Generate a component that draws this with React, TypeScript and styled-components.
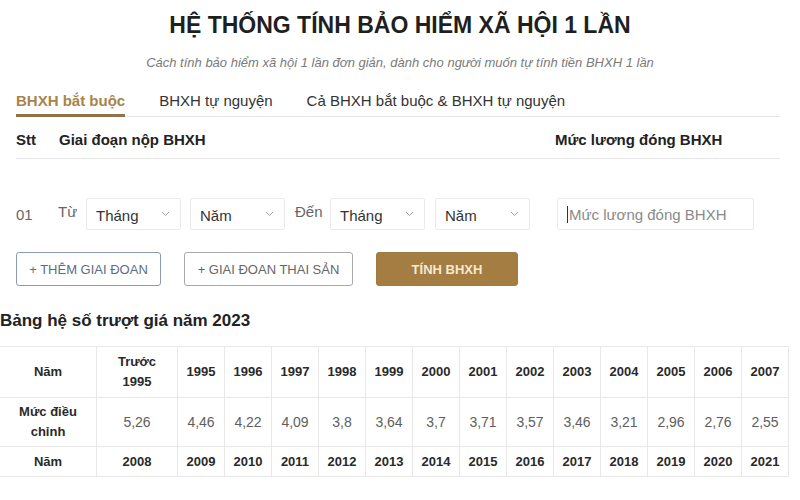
import React from 'react'
import styled, { createGlobalStyle } from 'styled-components'

const GlobalStyle = createGlobalStyle`
  body {
    margin: 0;
    background: #fff;
    font-family: 'Liberation Sans', Arial, sans-serif;
    color: #222;
  }
`

const Page = styled.div`
  width: 800px;
  height: 500px;
  overflow: hidden;
`

const Title = styled.h1`
  margin: 0;
  padding-top: 12px;
  text-align: center;
  font-size: 23px;
  line-height: 26px;
  font-weight: 700;
  color: #1f1f1f;
`

const Subtitle = styled.p`
  margin: 17px 0 0;
  text-align: center;
  font-size: 13px;
  line-height: 15px;
  font-style: italic;
  color: #7a7a7a;
`

const Form = styled.div`
  padding: 0 20px 0 16px;
`

const Tabs = styled.div`
  display: flex;
  gap: 34px;
  margin-top: 22px;
  border-bottom: 1px solid #e6e6e6;
`

const Tab = styled.div<{ $active?: boolean }>`
  padding-bottom: 5px;
  font-size: 15px;
  line-height: 17px;
  font-weight: ${(p) => (p.$active ? 700 : 400)};
  color: ${(p) => (p.$active ? '#a8844a' : '#333')};
  border-bottom: 3px solid ${(p) => (p.$active ? '#8f7448' : 'transparent')};
  margin-bottom: -1px;
`

const HeaderRow = styled.div`
  display: grid;
  grid-template-columns: 43px 496px 1fr;
  padding: 14px 0 10px;
  border-bottom: 1px solid #e6e6e6;
  font-size: 15px;
  line-height: 17px;
  font-weight: 700;
  color: #222;
`

const PeriodRow = styled.div`
  display: flex;
  align-items: center;
  margin-top: 39px;
  height: 32px;
  font-size: 15px;
  color: #666;
`

const Index = styled.span`
  width: 42px;
`

const Label = styled.span<{ $w: number }>`
  width: ${(p) => p.$w}px;
  align-self: flex-start;
  padding-top: 5px;
`

const Select = styled.div<{ $gap?: number }>`
  display: flex;
  align-items: center;
  justify-content: space-between;
  box-sizing: border-box;
  width: 95px;
  height: 32px;
  margin-right: ${(p) => p.$gap ?? 0}px;
  padding: 0 10px 0 9px;
  border: 1px solid #ebebeb;
  border-radius: 2px;
  font-size: 15px;
  color: #333;

  span {
    padding-top: 3px;
  }
`

const Input = styled.div`
  display: flex;
  align-items: center;
  box-sizing: border-box;
  width: 197px;
  height: 32px;
  margin-left: 27px;
  padding: 0 9px;
  border: 1px solid #ebebeb;
  border-radius: 2px;
  font-size: 15px;
  color: #8a8a8a;

  i {
    width: 1px;
    height: 17px;
    margin-right: 1px;
    background: #333;
  }
`

const Actions = styled.div`
  display: flex;
  gap: 23px;
  margin-top: 22px;
`

const Button = styled.div<{ $variant: 'blue' | 'gray' | 'gold'; $w: number }>`
  display: flex;
  align-items: center;
  justify-content: center;
  box-sizing: border-box;
  width: ${(p) => p.$w}px;
  height: 34px;
  border-radius: 3px;
  font-size: 13px;
  text-transform: uppercase;
  border: 1px solid
    ${(p) => (p.$variant === 'blue' ? '#8a9bb3' : p.$variant === 'gray' ? '#a9a9a9' : '#a07a3f')};
  background: ${(p) => (p.$variant === 'gold' ? '#a47d42' : '#fff')};
  color: ${(p) => (p.$variant === 'blue' ? '#5b6d86' : p.$variant === 'gray' ? '#666' : '#f6e9cf')};
  font-weight: ${(p) => (p.$variant === 'gold' ? 700 : 400)};
`

const TableTitle = styled.h2`
  margin: 25px 0 0;
  font-size: 17px;
  line-height: 20px;
  font-weight: 700;
  color: #222;
`

const Table = styled.table`
  margin-top: 15px;
  margin-left: -1px;
  border-collapse: collapse;
  table-layout: fixed;
  width: 790px;
`

const Cell = styled.td<{ $bold?: boolean; $h: number }>`
  height: ${(p) => p.$h}px;
  padding: 0 2px;
  border: 1px solid #e8e8e8;
  text-align: center;
  vertical-align: middle;
  font-size: ${(p) => (p.$bold ? 13 : 14)}px;
  line-height: 20px;
  font-weight: ${(p) => (p.$bold ? 700 : 400)};
  color: ${(p) => (p.$bold ? '#2a2a2a' : '#5e5e5e')};
`

const Chevron = () => (
  <svg width="9" height="6" viewBox="0 0 9 6" fill="none">
    <path d="M1 1l3.5 3.5L8 1" stroke="#a0a0a0" strokeWidth="1" />
  </svg>
)

const years1 = ['1995', '1996', '1997', '1998', '1999', '2000', '2001', '2002', '2003', '2004', '2005', '2006', '2007']
const rates = ['5,26', '4,46', '4,22', '4,09', '3,8', '3,64', '3,7', '3,71', '3,57', '3,46', '3,21', '2,96', '2,76', '2,55']
const years2 = ['2008', '2009', '2010', '2011', '2012', '2013', '2014', '2015', '2016', '2017', '2018', '2019', '2020', '2021']

const App: React.FC = () => (
  <Page>
    <GlobalStyle />
    <Title>HỆ THỐNG TÍNH BẢO HIỂM XÃ HỘI 1 LẦN</Title>
    <Subtitle>
      Cách tính bảo hiểm xã hội 1 lần đơn giản, dành cho người muốn tự tính tiền BHXH 1 lần
    </Subtitle>
    <Form>
      <Tabs>
        <Tab $active>BHXH bắt buộc</Tab>
        <Tab>BHXH tự nguyện</Tab>
        <Tab>Cả BHXH bắt buộc &amp; BHXH tự nguyện</Tab>
      </Tabs>
      <HeaderRow>
        <span>Stt</span>
        <span>Giai đoạn nộp BHXH</span>
        <span>Mức lương đóng BHXH</span>
      </HeaderRow>
      <PeriodRow>
        <Index>01</Index>
        <Label $w={28}>Từ</Label>
        <Select $gap={9}>
          <span>Tháng</span>
          <Chevron />
        </Select>
        <Select $gap={10}>
          <span>Năm</span>
          <Chevron />
        </Select>
        <Label $w={35}>Đến</Label>
        <Select $gap={10}>
          <span>Tháng</span>
          <Chevron />
        </Select>
        <Select>
          <span>Năm</span>
          <Chevron />
        </Select>
        <Input>
          <i />
          Mức lương đóng BHXH
        </Input>
      </PeriodRow>
      <Actions>
        <Button $variant="blue" $w={145}>+ Thêm giai đoan</Button>
        <Button $variant="gray" $w={169}>+ Giai đoan thai sản</Button>
        <Button $variant="gold" $w={142}>Tính BHXH</Button>
      </Actions>
    </Form>
    <TableTitle>Bảng hệ số trượt giá năm 2023</TableTitle>
    <Table>
      <colgroup>
        <col style={{ width: 97 }} />
        <col style={{ width: 81 }} />
        {years1.map((y) => (
          <col key={y} style={{ width: 47 }} />
        ))}
      </colgroup>
      <tbody>
        <tr>
          <Cell $bold $h={50}>Năm</Cell>
          <Cell $bold $h={50}>
            Trước
            <br />
            1995
          </Cell>
          {years1.map((y) => (
            <Cell key={y} $bold $h={50}>
              {y}
            </Cell>
          ))}
        </tr>
        <tr>
          <Cell $bold $h={48}>
            Mức điều
            <br />
            chỉnh
          </Cell>
          {rates.map((r, i) => (
            <Cell key={i} $h={48}>
              {r}
            </Cell>
          ))}
        </tr>
        <tr>
          <Cell $bold $h={29}>Năm</Cell>
          {years2.map((y) => (
            <Cell key={y} $bold $h={29}>
              {y}
            </Cell>
          ))}
        </tr>
      </tbody>
    </Table>
  </Page>
)

export default App
